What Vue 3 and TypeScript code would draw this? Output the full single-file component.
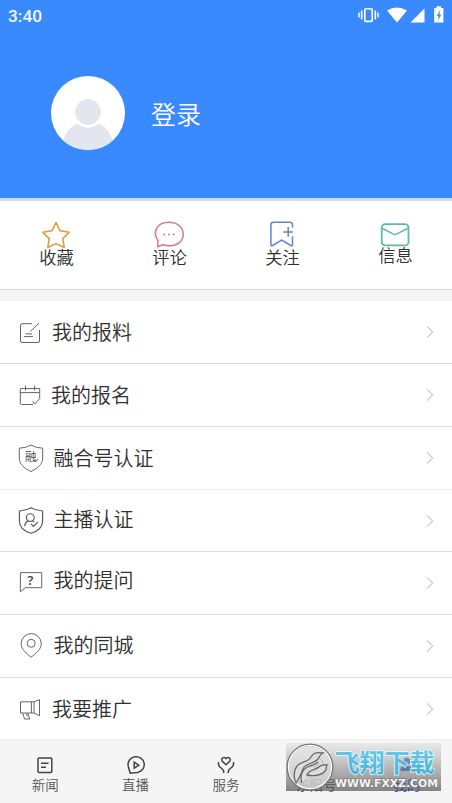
<script setup lang="ts">
interface Row {
  id: string
  label: string
}

const rows: Row[] = [
  { id: 'report', label: '我的报料' },
  { id: 'signup', label: '我的报名' },
  { id: 'media', label: '融合号认证' },
  { id: 'anchor', label: '主播认证' },
  { id: 'question', label: '我的提问' },
  { id: 'city', label: '我的同城' },
  { id: 'promote', label: '我要推广' },
]
</script>

<template>
  <main class="screen">
    <header class="hero">
      <div class="status">
        <span class="clock">3:40</span>
        <svg class="status-icons" viewBox="356 4 92 24" width="92" height="24">
          <g fill="none" stroke="#fff">
            <rect x="364.8" y="8.8" width="7.4" height="12.6" rx="1" stroke-width="1.6" />
            <path d="M361.7 10.5v9M375.3 10.5v9" stroke-width="1.6" />
            <path d="M359 12.5v5M378 12.5v5" stroke-width="1.4" />
          </g>
          <path d="M387 10.6Q397 4.6 407 10.6L397 22.5Z" fill="#fff" />
          <path d="M424.5 8.6V22.4H410.5Z" fill="#fff" />
          <path d="M436.6 6.2h4.4v1.8h2.4v14.6h-9.2V8h2.4z" fill="#fff" />
          <path d="M440.2 10l-3.4 6h1.8l-.6 4.6 3.2-5.8h-1.8z" fill="#3989ff" />
        </svg>
      </div>
      <div class="profile">
        <svg class="avatar" viewBox="0 0 74 74" width="74" height="74">
          <defs>
            <clipPath id="disc"><circle cx="37" cy="37" r="37" /></clipPath>
          </defs>
          <circle cx="37" cy="37" r="37" fill="#fff" />
          <g clip-path="url(#disc)">
            <path d="M12 67C14 57 19 51 26 47.6Q37 56 48 47.6C55 51 60 57 62 67V76H12Z" fill="#e3e6ee" />
            <circle cx="37" cy="36" r="12.7" fill="#e3e6ee" />
          </g>
        </svg>
        <span class="login">登录</span>
      </div>
    </header>

    <nav class="actions">
      <a class="action">
        <svg viewBox="0 0 32 30" width="32" height="30">
          <path d="M16 2.5L20 10.7L29.2 12.2L22.8 18.6L24.2 27.5L16 23.6L7.8 27.5L9.2 18.6L2.8 12.2L12 10.7Z" fill="none" stroke="#e09a3d" stroke-width="1.6" stroke-linejoin="round" />
        </svg>
        <span>收藏</span>
      </a>
      <a class="action">
        <svg viewBox="0 0 32 30" width="32" height="30">
          <path d="M5 20.5C-.5 13 3 2.3 16 2.3C24.5 2.3 30.2 7.5 30.2 14.2C30.2 21 24.5 25.8 16 25.8C13.5 25.8 11.6 25.3 10 24.8L4.6 26.8Z" fill="none" stroke="#d67888" stroke-width="1.5" stroke-linejoin="round" />
          <g fill="#d67888"><circle cx="11.3" cy="14.4" r="1" /><circle cx="16" cy="14.4" r="1" /><circle cx="20.7" cy="14.4" r="1" /></g>
        </svg>
        <span>评论</span>
      </a>
      <a class="action">
        <svg viewBox="0 0 32 30" width="32" height="30">
          <path d="M26.5 7.5V5Q26.5 2.3 23.8 2.3H7.6Q4.9 2.3 4.9 5V24.7Q4.9 26.5 6.5 25.5L15.7 20.2L24.9 25.5Q26.5 26.5 26.5 24.7V16.2M22.2 7V16.8M17.3 11.9H26.8" fill="none" stroke="#6484ce" stroke-width="1.5" />
        </svg>
        <span>关注</span>
      </a>
      <a class="action message">
        <svg viewBox="0 0 32 30" width="32" height="30">
          <rect x="2.7" y="4.1" width="26.8" height="21.3" rx="3.5" fill="none" stroke="#5bbca9" stroke-width="1.8" />
          <path d="M3 8.3L14.5 14.1Q16 14.8 17.5 14.1L29 8.3" fill="none" stroke="#5bbca9" stroke-width="1.6" />
        </svg>
        <span>信息</span>
      </a>
    </nav>

    <section class="list">
      <div v-for="row in rows" :key="row.id" class="row" :class="row.id">
        <svg class="icon" viewBox="16 -16 32 32" width="32" height="32">
          <g v-if="row.id === 'report'">
            <path d="M32 -8.3H22Q20.5 -8.3 20.5 -6.8V9Q20.5 10.5 22 10.5H38Q39.5 10.5 39.5 9V-2M39 -8.7L30.3 -.5M25.5 1.9H32M24 4.6H33" />
          </g>
          <g v-else-if="row.id === 'signup'">
            <path d="M33 9.5H21.3Q20.3 9.5 20.3 8.5V-6.5H39.7V3.5L34.5 9.2L32.7 6.3M20.3 -2.4H39.7M25.5 -9.5V-4.5M34.5 -9.5V-4.5" />
          </g>
          <g v-else-if="row.id === 'media'">
            <path d="M31 -13Q36 -10 42.7 -9.8V0C42.7 7 37 10.5 31 13.5C25 10.5 19.3 7 19.3 0V-9.8Q26 -10 31 -13Z" />
            <text x="25" y="3.3" class="seal">融</text>
            <path d="M33.3 2L35.2 4L38 1" />
          </g>
          <g v-else-if="row.id === 'anchor'" class="strong">
            <path d="M31 -13.2Q36 -10.5 42.6 -10V0C42.6 6.5 37 10.5 31 12.3C25 10.5 19.4 6.5 19.4 0V-10Q26 -10.5 31 -13.2Z" />
            <circle cx="30.3" cy="-3.4" r="3.9" />
            <path d="M24.6 5.2Q25.2 1.2 28 -.2M32.8 -.2L34.3 1.2M31 2.8L33.4 5.4L38 .8" />
          </g>
          <g v-else-if="row.id === 'question'">
            <path d="M20.4 -9.4H41.7V5.7H25.4L20.4 9.8Z" />
            <text x="27.6" y="2.8" class="mark">?</text>
          </g>
          <g v-else-if="row.id === 'city'">
            <path d="M31.2 11.2C27 7.8 21.1 3.4 21.1 -2.3A10.1 10.1 0 0 1 41.3 -2.3C41.3 3.4 35.4 7.8 31.2 11.2Z" />
            <circle cx="31.2" cy="-2.7" r="4" />
          </g>
          <g v-else>
            <path d="M34 -7.2H20.5V4H34M31.4 -7.2V4M34 -7.2L39.5 -9.3V6.8L34 4ZM22.7 4L24.5 10H29.7L27.6 4M26.5 4.8L27.3 7.2" />
          </g>
        </svg>
        <span class="label">{{ row.label }}</span>
        <svg class="chevron" viewBox="0 0 8 14" width="8" height="14">
          <path d="M1 1.3L6.7 7L1 12.7" />
        </svg>
      </div>
    </section>

    <footer class="tabs">
      <a class="tab">
        <svg viewBox="0 0 20 20" width="20" height="20">
          <rect x="3" y="3" width="13.8" height="14.4" rx="1" />
          <path d="M6 8.2H13.5M6 12.2H11" />
        </svg>
        <span>新闻</span>
      </a>
      <a class="tab">
        <svg viewBox="0 0 20 20" width="20" height="20">
          <path d="M4.2 18.2L2.2 11A8.1 7.9 0 1 1 11.3 17.4Z" /><path d="M8.2 7.2L12.8 10.2L8.2 13.2Z" />
        </svg>
        <span>直播</span>
      </a>
      <a class="tab">
        <svg viewBox="0 0 20 20" width="20" height="20">
          <path d="M10 9.8L6.4 6.4C4.2 4 7.7 .7 10 3.5C12.3 .7 15.8 4 13.6 6.4ZM2.5 7V9.5Q3 12 5.6 13.4Q7.7 14.6 7.9 18M17.5 7V9.5Q17 12 14.4 13.4Q12.3 14.6 12.1 18" />
        </svg>
        <span>服务</span>
      </a>
      <a class="tab">
        <svg viewBox="0 0 20 20" width="20" height="20">
          <circle cx="10" cy="10" r="7.5" /><path d="M7 10L9.2 12.5L13 8" />
        </svg>
        <span>东阳号</span>
      </a>
      <a class="tab active">
        <svg viewBox="0 0 20 20" width="20" height="20">
          <circle cx="10" cy="6" r="3.5" /><path d="M3.5 16V14Q3.5 11 7 11H13Q16.5 11 16.5 14V16Z" />
        </svg>
        <span>我的</span>
      </a>
      <svg class="watermark" viewBox="0 0 155 48" width="155" height="48">
        <defs>
          <linearGradient id="shade" x2="0" y2="1">
            <stop offset="0" stop-color="#e0e0e0" stop-opacity=".55" />
            <stop offset=".45" stop-color="#999" stop-opacity=".6" />
            <stop offset="1" stop-color="#404040" stop-opacity=".62" />
          </linearGradient>
          <linearGradient id="sky" x2="0" y2="1">
            <stop offset="0" stop-color="#79cce8" />
            <stop offset="1" stop-color="#3cafdd" />
          </linearGradient>
        </defs>
        <rect width="155" height="48" fill="url(#shade)" />
        <circle cx="24" cy="24" r="22.3" fill="#e4e4e4" fill-opacity=".7" stroke="#777" stroke-width="2.4" />
        <circle cx="24" cy="24" r="21.6" fill="none" stroke="#fff" stroke-width="1.2" />
        <path d="M10 40C7 34 8 27 11 23C14 18 22 20 25 14C27 10 32 9 37 10C33 12 34 14 31 17C27 21 19 20 17 26C15 32 13 35 10 40Z" class="leaf" />
        <path d="M16 40C13 32 17 25 24 23C28 22 30 21 32 19M21 32C24 25 29 28 33 24C36 21 39 22 41 22C39 24 42 25 39 28C35 33 27 33 21 32Z" class="leaf" />
        <text x="48.5" y="28.5" class="brand" textLength="100" lengthAdjust="spacingAndGlyphs">飞翔下载</text>
        <text x="49" y="44" class="url" textLength="103" lengthAdjust="spacingAndGlyphs">WWW.FXXZ.COM</text>
      </svg>
    </footer>
  </main>
</template>

<style>
body {
  background: #fff;
  overflow: hidden;
}
</style>

<style scoped>
.screen {
  width: 452px;
  height: 803px;
  display: flex;
  flex-direction: column;
  background: #fff;
  color: #303030;
  font-family: "Noto Sans CJK SC", sans-serif;
  font-weight: 350;
  overflow: hidden;
}
.hero {
  flex: none;
  box-sizing: border-box;
  height: 201px;
  background: #3989ff;
  border-bottom: 3px solid #d5d9e0;
}
.status {
  display: flex;
  justify-content: space-between;
  height: 32px;
  padding: 4px 4px 0 8px;
  box-sizing: border-box;
}
.clock {
  color: #f4f9ff;
  font: 500 17.3px/24px Roboto, sans-serif;
}
.profile {
  display: flex;
  align-items: center;
  gap: 26px;
  padding: 44px 0 0 51px;
}
.login {
  color: #fff;
  font-size: 25px;
  line-height: 30px;
}
.actions {
  flex: none;
  display: grid;
  grid-template-columns: repeat(4, 113px);
  box-sizing: border-box;
  height: 89px;
  padding-top: 19px;
  border-bottom: 1px solid #d8d8d8;
}
.action {
  display: flex;
  flex-direction: column;
  align-items: center;
  font-size: 17.3px;
  line-height: 20px;
}
.action svg {
  margin-right: 1px;
}
.action span {
  margin-top: -3px;
}
.action.message span {
  margin-top: -5px;
}
.list {
  flex: none;
  border-top: 11px solid #f4f4f4;
}
.row {
  display: flex;
  align-items: center;
  box-sizing: border-box;
  height: 63px;
  padding: 0 18px 0 16px;
  border-bottom: 1px solid #dcdcdc;
}
.icon {
  flex: none;
  fill: none;
  stroke: #666;
  stroke-width: 1;
}
.strong {
  stroke: #555;
  stroke-width: 1.15;
}
.label {
  flex: 1;
  margin-left: 5.5px;
  font-size: 20px;
  line-height: 28px;
}
.report .label,
.promote .label {
  margin-left: 4px;
}
.signup .label {
  margin-left: 3px;
}
.anchor,
.promote {
  height: 62px;
}
.media,
.promote {
  border-bottom-color: #eee;
}
.anchor .label {
  padding-bottom: 4px;
}
.question .label {
  padding-bottom: 6px;
}
.question .icon {
  position: relative;
  top: -1px;
}
.city .label {
  padding-bottom: 2px;
}
.chevron {
  flex: none;
  fill: none;
  stroke: #c9c9c9;
  stroke-width: 1.1;
}
.seal,
.mark {
  stroke: none;
  fill: #444;
  font-size: 11.5px;
}
.mark {
  font: 600 12.5px "Noto Sans", sans-serif;
}
.tabs {
  flex: 1;
  position: relative;
  display: grid;
  grid-template-columns: repeat(5, 90.4px);
  padding-top: 15px;
  background: #f5f5f5;
}
.tab {
  display: flex;
  flex-direction: column;
  align-items: center;
  font-size: 13.5px;
  line-height: 18px;
  color: #555;
}
.tab svg {
  fill: none;
  stroke: #444;
  stroke-width: 1.5;
}
.tab.active {
  color: #0c50c0;
}
.tab.active svg {
  fill: #2464c8;
  stroke: none;
}
.watermark {
  position: absolute;
  left: 286px;
  top: 3px;
}
.leaf {
  fill: #ddd;
  stroke: #686868;
  stroke-width: 1.3;
}
.brand {
  font: 700 25px "Noto Sans CJK SC", sans-serif;
  fill: url(#sky);
  stroke: #e9f8fc;
  stroke-width: 1.5;
  paint-order: stroke;
}
.url {
  font: 700 10px "DejaVu Sans", sans-serif;
  fill: #f4f4f4;
  stroke: #777;
  stroke-width: 1;
  paint-order: stroke;
}
</style>
